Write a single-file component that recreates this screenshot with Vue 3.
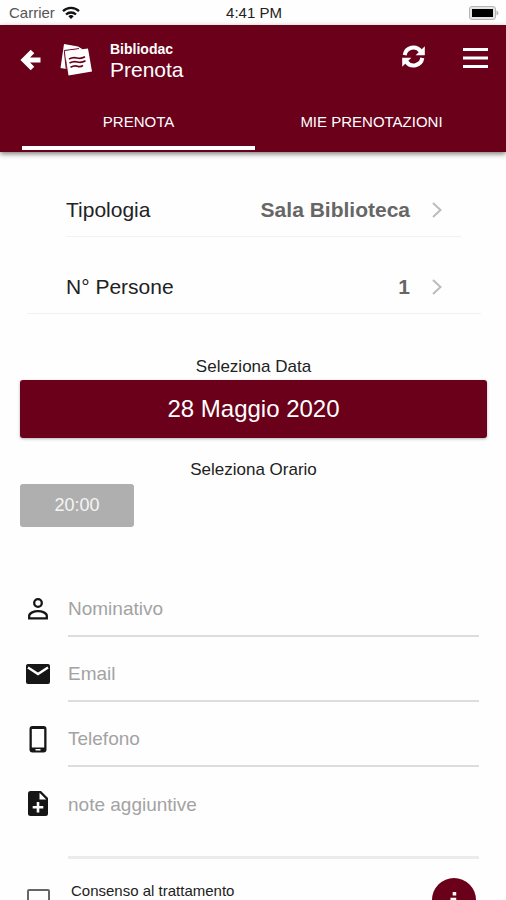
<script setup>
import { ref } from 'vue'

const tabs = ['PRENOTA', 'MIE PRENOTAZIONI']
const activeTab = ref(0)

const options = [
  { label: 'Tipologia', value: 'Sala Biblioteca', inset: true },
  { label: 'N° Persone', value: '1', inset: false },
]

const name = ref('')
const email = ref('')
const phone = ref('')
const notes = ref('')
const consent = ref(false)
</script>

<template>
  <div class="app">
    <div class="status">
      <div class="carrier">
        <span>Carrier</span>
        <svg class="wifi" viewBox="0 0 18 13" aria-hidden="true">
          <g fill="none" stroke="#111" stroke-width="2.3">
            <path d="M1 5.2a11.5 11.5 0 0 1 16 0" />
            <path d="M4 8.5a7.3 7.3 0 0 1 10 0" />
          </g>
          <path d="M9 13l-2.7-2.8a4 4 0 0 1 5.4 0z" fill="#111" />
        </svg>
      </div>
      <span class="clock">4:41 PM</span>
      <svg class="battery" viewBox="0 0 30 14" aria-hidden="true">
        <rect x="0.5" y="0.5" width="26" height="13" rx="2.5" fill="#e4e4e4" stroke="#b5b5b5" />
        <rect x="3" y="3" width="21" height="8" fill="#000" />
        <path d="M27.5 4.5q2 .8 2 2.5t-2 2.5z" fill="#b5b5b5" />
      </svg>
    </div>

    <header class="header">
      <div class="toolbar">
        <button class="icon-btn back" aria-label="Indietro">
          <svg viewBox="0 0 21 22" aria-hidden="true">
            <path d="M12.500 2.500 4 11l8.500 8.500M5 11h15.500" fill="none" stroke="#fff" stroke-width="5" />
          </svg>
        </button>
        <svg class="logo" viewBox="0 0 32 32" aria-hidden="true">
          <path d="M4 0 18 2.500l5 3L5 8 6.500 25 .5 24z" fill="#fff" />
          <path d="M4.300 6.500 19 4.600M4.300 6.500 6.300 26" fill="none" stroke="#6a001a" stroke-width="1" />
          <path d="M4.800 7.500 28 4.500l4 23L8.500 31.500z" fill="#fff" />
          <g fill="none" stroke="#6a001a" stroke-width="1.700">
            <path d="M9 15q4-2.200 8-1t8-1.200" />
            <path d="M9.500 19q4-2.200 8-1t8-1.200" />
            <path d="M10.500 23.200q4-2.200 7-1t5.500-.9" />
          </g>
        </svg>
        <div class="titles">
          <span class="brand">Bibliodac</span>
          <h1>Prenota</h1>
        </div>
        <button class="icon-btn refresh" aria-label="Aggiorna">
          <svg viewBox="0 0 24 24" aria-hidden="true">
            <g fill="none" stroke="#fff" stroke-width="4.200">
              <path d="M2.800 10.500a9.300 9.300 0 0 1 16.700-4" />
              <path d="M21.200 13.500a9.300 9.300 0 0 1-16.700 4" />
            </g>
            <path d="M23.800 1.200v9.600h-9.600zM.2 22.800v-9.600h9.600z" fill="#fff" />
          </svg>
        </button>
        <button class="icon-btn menu" aria-label="Menu">
          <svg viewBox="0 0 25 22" aria-hidden="true">
            <path d="M0 2.500h25M0 11h25M0 19.500h25" stroke="#fff" stroke-width="3" />
          </svg>
        </button>
      </div>
      <nav class="tabs">
        <button
          v-for="(tab, i) in tabs"
          :key="tab"
          class="tab"
          :class="{ active: activeTab === i }"
          @click="activeTab = i"
        >{{ tab }}</button>
      </nav>
    </header>

    <main class="content">
      <div class="options">
        <button v-for="o in options" :key="o.label" class="option" :class="{ inset: o.inset }">
          <span>{{ o.label }}</span>
          <span class="value">{{ o.value }}</span>
          <svg viewBox="0 0 10 16" aria-hidden="true">
            <path d="M1 1l7.500 7L1 15" fill="none" stroke="#bcbcbc" stroke-width="2" />
          </svg>
        </button>
      </div>

      <section class="picker">
        <h2>Seleziona Data</h2>
        <button class="date">28 Maggio 2020</button>
        <h2 class="time-title">Seleziona Orario</h2>
        <button class="slot">20:00</button>
      </section>

      <form class="form" @submit.prevent>
        <div class="field">
          <label for="name">
            <svg viewBox="0 0 28 26" aria-hidden="true">
              <g fill="none" stroke="#161616" stroke-width="2.300">
                <circle cx="14" cy="7" r="3.800" />
                <path d="M5.200 22.300v-2.500c0-2.800 5-4.700 8.800-4.700s8.800 1.900 8.800 4.700v2.500z" />
              </g>
            </svg>
          </label>
          <input id="name" v-model="name" type="text" placeholder="Nominativo">
        </div>
        <div class="field">
          <label for="email">
            <svg viewBox="0 0 28 26" aria-hidden="true">
              <rect x="2" y="3" width="24" height="20" rx="2" />
              <path d="M4 6.500l10 6.500 10-6.500" fill="none" stroke="#fefefe" stroke-width="2.400" />
            </svg>
          </label>
          <input id="email" v-model="email" type="email" placeholder="Email">
        </div>
        <div class="field">
          <label for="phone">
            <svg viewBox="0 0 28 26" aria-hidden="true">
              <path fill-rule="evenodd" d="M8.500 0h11a3 3 0 0 1 3 3v20.500a3 3 0 0 1-3 3h-11a3 3 0 0 1-3-3V3a3 3 0 0 1 3-3zM7.800 3v18.500h12.400V3zM11.500 23v1.500h5V23z" />
            </svg>
          </label>
          <input id="phone" v-model="phone" type="tel" placeholder="Telefono">
        </div>
        <div class="field notes">
          <label for="notes">
            <svg viewBox="0 0 28 26" aria-hidden="true">
              <path d="M6.500 0H17l7 7v15.500a2.500 2.500 0 0 1-2.500 2.500h-15A2.500 2.500 0 0 1 4 22.500v-20A2.500 2.500 0 0 1 6.500 0z" />
              <path d="M15.500 1.800V8.500h6.700zM14 11v10.500M8.700 16.200h10.600" fill="#fefefe" />
              <path d="M14 11v10.500M8.700 16.200h10.600" stroke="#fefefe" stroke-width="2.600" />
            </svg>
          </label>
          <textarea id="notes" v-model="notes" placeholder="note aggiuntive"></textarea>
        </div>
        <div class="consent">
          <input id="consent" v-model="consent" type="checkbox">
          <label for="consent">Consenso al trattamento</label>
          <button type="button" class="info" aria-label="Informazioni">
            <svg viewBox="0 0 10 18" aria-hidden="true"><path d="M3.500 0h4v4h-4zM1 6.500h6.500v8H9V17H1v-2.500h2V9H1z" fill="#fff" /></svg>
          </button>
        </div>
      </form>
    </main>
  </div>
</template>

<style>
body {
  margin: 0;
  background: #fefefe;
}
</style>

<style scoped>
.app {
  display: flex;
  flex-direction: column;
  height: 100vh;
  overflow: hidden;
  font-family: "Liberation Sans", Arial, sans-serif;
  color: #222;
}

button,
input,
textarea {
  font-family: inherit;
  margin: 0;
  padding: 0;
  border: 0;
  background: none;
}

button {
  cursor: pointer;
}

svg {
  display: block;
}

.status {
  display: grid;
  grid-template-columns: 1fr auto 1fr;
  align-items: center;
  flex: none;
  height: 25px;
  padding: 0 7px 0 9px;
  font-size: 15px;
}

.carrier {
  display: flex;
  align-items: center;
  gap: 7px;
  color: #555;
}

.wifi {
  width: 18px;
  height: 13px;
}

.battery {
  justify-self: end;
  width: 30px;
  height: 14px;
}

.header {
  position: relative;
  flex: none;
  background: #6a001a;
  color: #fff;
  box-shadow: 0 2px 5px rgba(0, 0, 0, 0.5);
}

.toolbar {
  display: flex;
  align-items: center;
  height: 70px;
  padding: 0 18px 0 20px;
}

.icon-btn svg {
  width: 100%;
  height: 100%;
}

.back {
  width: 21px;
  height: 22px;
}

.logo {
  width: 32px;
  height: 32px;
  margin-left: 19px;
}

.titles {
  flex: 1;
  padding-top: 2px;
  margin-left: 18px;
}

.brand {
  display: block;
  font-size: 14px;
  font-weight: 700;
  line-height: 18px;
}

h1 {
  margin: 0;
  font-size: 21px;
  font-weight: 400;
  line-height: 24px;
}

.refresh {
  width: 23px;
  height: 23px;
  margin-bottom: 8px;
}

.menu {
  width: 25px;
  height: 22px;
  margin: 0 0 4px 38px;
}

.tabs {
  display: flex;
  height: 57px;
  padding: 0 18px 0 22px;
}

.tab {
  flex: 1;
  padding-top: 2px;
  border-bottom: 4px solid transparent;
  margin-bottom: 2px;
  color: #fff;
  font-size: 15px;
}

.tab.active {
  border-color: #fff;
}

.content {
  flex: 1;
  min-height: 0;
  overflow-y: auto;
  scrollbar-width: none;
}

.options {
  display: flex;
  flex-direction: column;
  padding: 8px 25px 0 27px;
}

.option {
  display: flex;
  align-items: center;
  height: 77px;
  padding: 24px 39px 0;
  border-bottom: 1px solid #f1f1f1;
  color: #222;
  font-size: 21px;
}

.option.inset {
  margin: 0 20px 0 39px;
  padding: 24px 19px 0 0;
}

.value {
  flex: 1;
  color: #666;
  font-weight: 700;
  text-align: right;
}

.option svg {
  width: 10px;
  height: 16px;
  margin-left: 22px;
}

.picker {
  padding: 43px 19px 0 20px;
}

h2 {
  margin: 0;
  font-size: 17px;
  font-weight: 400;
  line-height: 20px;
  text-align: center;
}

.date {
  display: block;
  width: 100%;
  height: 58px;
  margin-top: 3px;
  border-radius: 3px;
  background: #6a001a;
  box-shadow: 0 1px 3px rgba(0, 0, 0, 0.3);
  color: #fff;
  font-size: 24px;
}

.time-title {
  margin-top: 22px;
}

.slot {
  display: block;
  width: 114px;
  height: 43px;
  margin-top: 4px;
  border-radius: 3px;
  background: #afafaf;
  color: #f5f5f5;
  font-size: 18px;
}

.form {
  padding: 45px 27px 20px 24px;
}

.field {
  display: flex;
  align-items: flex-start;
  gap: 16px;
  height: 65px;
}

.field label svg {
  width: 28px;
  height: 26px;
  margin-top: 24px;
  fill: #161616;
  overflow: visible;
}

.field input,
.field textarea {
  flex: 1;
  min-width: 0;
  height: 100%;
  box-sizing: border-box;
  padding: 11px 0 0;
  border-bottom: 2px solid #ddd;
  outline: none;
  color: #222;
  font-size: 19px;
  resize: none;
}

.field textarea {
  padding-top: 27px;
  border-bottom: 3px solid #ebebeb;
  line-height: 22px;
}

.field ::placeholder {
  color: #a3a3a3;
  opacity: 1;
}

.field.notes {
  height: 92px;
}

.consent {
  display: flex;
  align-items: center;
  height: 44px;
  margin-top: 19px;
  padding: 0 3px;
}

.consent input {
  appearance: none;
  width: 23px;
  height: 23px;
  border: 2px solid #666;
  border-radius: 2px;
}

.consent input:checked {
  background: #6a001a;
}

.consent label {
  flex: 1;
  align-self: flex-start;
  padding: 4px 0 0 21px;
  font-size: 15px;
  line-height: 18px;
}

.info {
  display: grid;
  place-items: center;
  width: 44px;
  height: 44px;
  border-radius: 50%;
  background: #6a001a;
}

.info svg {
  width: 10px;
  height: 16px;
}
</style>
